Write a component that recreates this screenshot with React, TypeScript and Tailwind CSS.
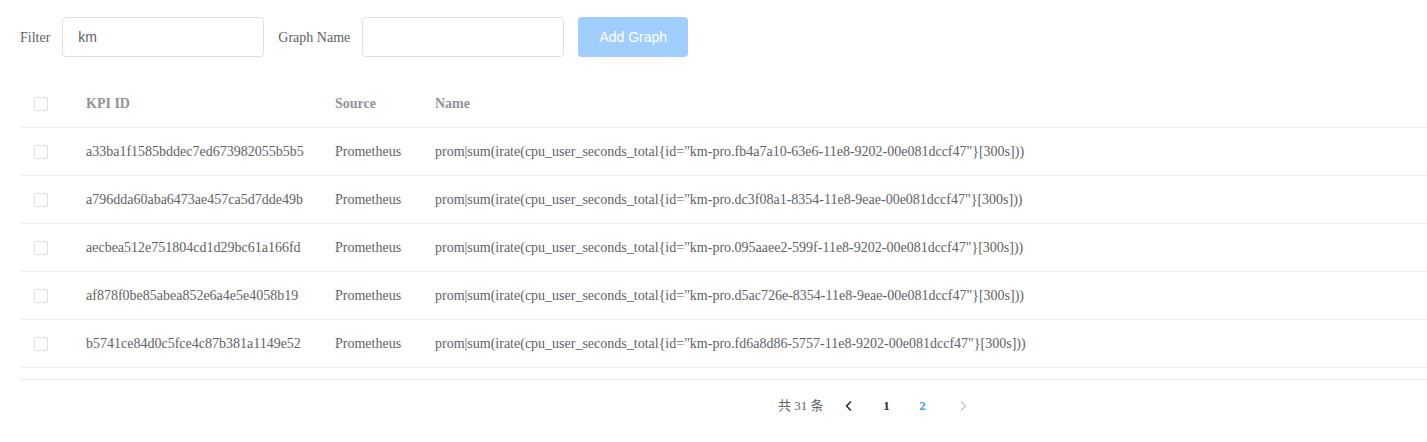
const rows = [
  { id: "a33ba1f1585bddec7ed673982055b5b5", name: 'prom|sum(irate(cpu_user_seconds_total{id="km-pro.fb4a7a10-63e6-11e8-9202-00e081dccf47"}[300s]))' },
  { id: "a796dda60aba6473ae457ca5d7dde49b", name: 'prom|sum(irate(cpu_user_seconds_total{id="km-pro.dc3f08a1-8354-11e8-9eae-00e081dccf47"}[300s]))' },
  { id: "aecbea512e751804cd1d29bc61a166fd", name: 'prom|sum(irate(cpu_user_seconds_total{id="km-pro.095aaee2-599f-11e8-9202-00e081dccf47"}[300s]))' },
  { id: "af878f0be85abea852e6a4e5e4058b19", name: 'prom|sum(irate(cpu_user_seconds_total{id="km-pro.d5ac726e-8354-11e8-9eae-00e081dccf47"}[300s]))' },
  { id: "b5741ce84d0c5fce4c87b381a1149e52", name: 'prom|sum(irate(cpu_user_seconds_total{id="km-pro.fd6a8d86-5757-11e8-9202-00e081dccf47"}[300s]))' },
];

function Checkbox() {
  return <span className="block w-[14px] h-[14px] border border-[#dcdfe6] rounded-[2px] bg-white" />;
}

function App() {
  return (
    <div className="min-h-[442px] bg-white font-['Liberation_Serif',serif] text-[14px] text-[#606266]">
      <div className="flex items-center pt-[17px] pl-[20px]">
        <label className="mr-[12px]">Filter</label>
        <input
          defaultValue="km"
          className="w-[202px] h-[40px] border border-[#dcdfe6] rounded-[4px] px-[15px] font-['Liberation_Sans',sans-serif] text-[14px] text-[#606266] outline-none"
        />
        <label className="ml-[14px] mr-[12px]">Graph Name</label>
        <input className="w-[202px] h-[40px] border border-[#dcdfe6] rounded-[4px] px-[15px] font-['Liberation_Sans',sans-serif] text-[14px] outline-none" />
        <button
          disabled
          className="ml-[14px] w-[110px] h-[40px] rounded-[4px] bg-[#a0cfff] text-white font-['Liberation_Sans',sans-serif] text-[14px]"
        >
          Add Graph
        </button>
      </div>

      <div className="ml-[20px] mt-[23px]">
        <div className="grid grid-cols-[56px_249px_100px_1fr] h-[48px] items-center border-b border-[#ebeef5] font-bold text-[#909399]">
          <div className="pl-[14px]"><Checkbox /></div>
          <div className="pl-[10px]">KPI ID</div>
          <div className="pl-[10px]">Source</div>
          <div className="pl-[10px]">Name</div>
        </div>
        {rows.map((r) => (
          <div key={r.id} className="grid grid-cols-[56px_249px_100px_1fr] h-[48px] items-center border-b border-[#ebeef5]">
            <div className="pl-[14px]"><Checkbox /></div>
            <div className="pl-[10px] whitespace-nowrap">{r.id}</div>
            <div className="pl-[10px]">Prometheus</div>
            <div className="pl-[10px] whitespace-nowrap">{r.name}</div>
          </div>
        ))}
        <div className="h-[12px] border-b border-[#ebeef5]" />
      </div>

      <div className="flex items-center h-[28px] mt-[12px] pl-[778px] text-[13px] font-['Liberation_Serif','Noto_Sans_CJK_SC',serif]">
        <span className="mr-[10px]">共 31 条</span>
        <span className="w-[30px] flex justify-center text-[#303133]">
          <svg width="14" height="14" viewBox="0 0 14 14" fill="none" stroke="currentColor" strokeWidth="1.6">
            <path d="M9 2.5 4.5 7 9 11.5" />
          </svg>
        </span>
        <span className="ml-[5px] w-[36px] text-center font-bold text-[#303133]">1</span>
        <span className="w-[36px] text-center font-bold text-[#409eff]">2</span>
        <span className="ml-[7px] w-[30px] flex justify-center text-[#c0c4cc]">
          <svg width="14" height="14" viewBox="0 0 14 14" fill="none" stroke="currentColor" strokeWidth="1.2">
            <path d="M5 2.5 9.5 7 5 11.5" />
          </svg>
        </span>
      </div>
    </div>
  );
}

export default App;
